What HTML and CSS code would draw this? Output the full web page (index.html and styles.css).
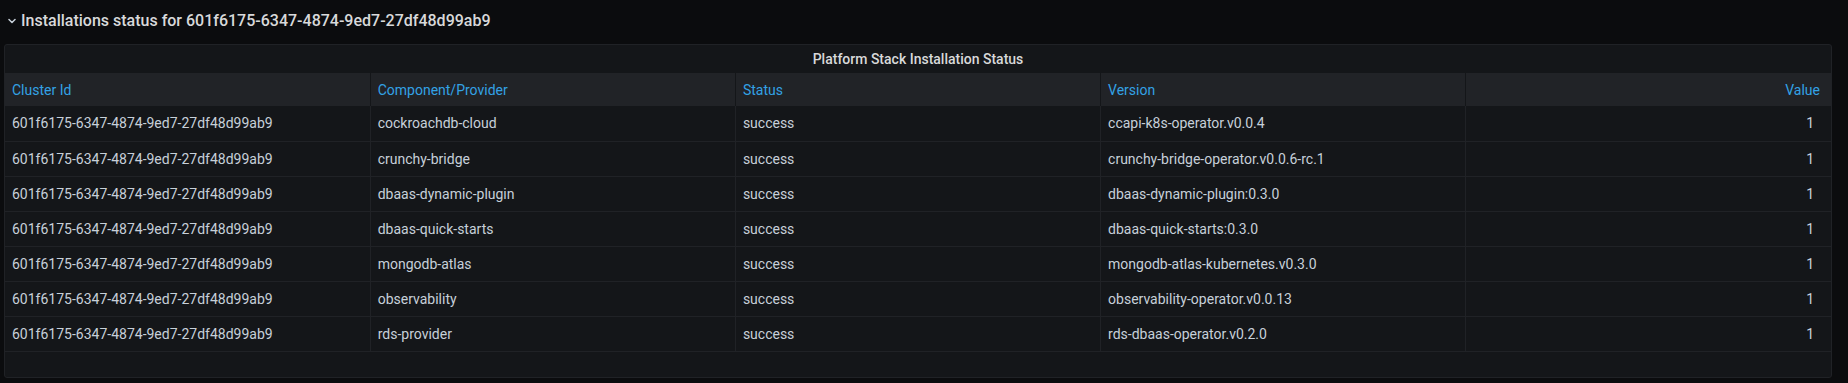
FILE: index.html
```html
<!DOCTYPE html>
<html lang="en">
<head>
    <meta charset="UTF-8">
    <title>Installations status</title>
    <link rel="stylesheet" href="styles.css">
</head>
<body>
    <div class="dashboard-row">
        <!-- collapse chevron -->
        <svg class="chevron" width="8" height="6" viewBox="0 0 8 6">
            <path d="M1 1.5 L4 4.5 L7 1.5" fill="none" stroke="#c7d0d9" stroke-width="1.5" stroke-linecap="round" stroke-linejoin="round"/>
        </svg>
        <span class="row-title">Installations status for 601f6175-6347-4874-9ed7-27df48d99ab9</span>
    </div>

    <div class="panel">
        <div class="panel-title">Platform Stack Installation Status</div>
        <table class="status-table">
            <thead>
                <tr>
                    <th>Cluster Id</th>
                    <th>Component/Provider</th>
                    <th>Status</th>
                    <th>Version</th>
                    <th class="num">Value</th>
                </tr>
            </thead>
            <tbody>
                <tr>
                    <td>601f6175-6347-4874-9ed7-27df48d99ab9</td>
                    <td>cockroachdb-cloud</td>
                    <td>success</td>
                    <td>ccapi-k8s-operator.v0.0.4</td>
                    <td class="num">1</td>
                </tr>
                <tr>
                    <td>601f6175-6347-4874-9ed7-27df48d99ab9</td>
                    <td>crunchy-bridge</td>
                    <td>success</td>
                    <td>crunchy-bridge-operator.v0.0.6-rc.1</td>
                    <td class="num">1</td>
                </tr>
                <tr>
                    <td>601f6175-6347-4874-9ed7-27df48d99ab9</td>
                    <td>dbaas-dynamic-plugin</td>
                    <td>success</td>
                    <td>dbaas-dynamic-plugin:0.3.0</td>
                    <td class="num">1</td>
                </tr>
                <tr>
                    <td>601f6175-6347-4874-9ed7-27df48d99ab9</td>
                    <td>dbaas-quick-starts</td>
                    <td>success</td>
                    <td>dbaas-quick-starts:0.3.0</td>
                    <td class="num">1</td>
                </tr>
                <tr>
                    <td>601f6175-6347-4874-9ed7-27df48d99ab9</td>
                    <td>mongodb-atlas</td>
                    <td>success</td>
                    <td>mongodb-atlas-kubernetes.v0.3.0</td>
                    <td class="num">1</td>
                </tr>
                <tr>
                    <td>601f6175-6347-4874-9ed7-27df48d99ab9</td>
                    <td>observability</td>
                    <td>success</td>
                    <td>observability-operator.v0.0.13</td>
                    <td class="num">1</td>
                </tr>
                <tr>
                    <td>601f6175-6347-4874-9ed7-27df48d99ab9</td>
                    <td>rds-provider</td>
                    <td>success</td>
                    <td>rds-dbaas-operator.v0.2.0</td>
                    <td class="num">1</td>
                </tr>
            </tbody>
        </table>
    </div>
</body>
</html>
```

FILE: styles.css
```css
* {
    margin: 0;
    padding: 0;
    box-sizing: border-box;
}
body {
    background: #0b0c0e;
    font-family: Roboto, "Liberation Sans", sans-serif;
    color: #c7d0d9;
    font-size: 14px;
}
.dashboard-row {
    display: flex;
    align-items: center;
    height: 44px;
    padding: 0 0 4px 8px;
}
.chevron {
    margin-right: 5px;
    margin-top: 1px;
}
.row-title {
    font-size: 16px;
    font-weight: 500;
    color: #d8d9da;
}
.panel {
    margin: 0 16px 0 4px;
    height: 334px;
    background: #141619;
    border: 1px solid #202226;
    border-radius: 3px;
    overflow: hidden;
}
.panel-title {
    height: 28px;
    line-height: 28px;
    text-align: center;
    font-weight: 500;
    color: #d8d9da;
}
.status-table {
    width: 100%;
    table-layout: fixed;
    border-collapse: collapse;
}
.status-table th {
    height: 33px;
    padding: 0 11px 0 7px;
    text-align: left;
    font-weight: 400;
    color: #33a2e5;
    background: #212327;
    border-right: 1px solid #141619;
}
.status-table td {
    height: 35px;
    padding: 0 17px 0 7px;
    border-bottom: 1px solid #202226;
    border-right: 1px solid #202226;
    white-space: nowrap;
}
.status-table th:last-child,
.status-table td:last-child {
    border-right: none;
}
.status-table .num {
    text-align: right;
}
```
